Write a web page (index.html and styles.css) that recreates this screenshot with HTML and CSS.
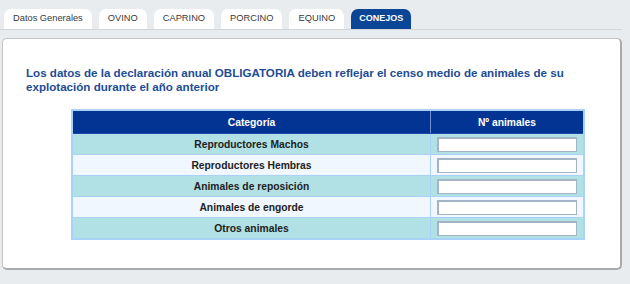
FILE: index.html
```html
<!DOCTYPE html>
<html lang="es">
<head>
  <meta charset="UTF-8" />
  <title>Censo</title>
  <link rel="stylesheet" href="styles.css">
</head>
<body>
  <div class="tabs">
    <div class="tab">Datos Generales</div>
    <div class="tab">OVINO</div>
    <div class="tab">CAPRINO</div>
    <div class="tab">PORCINO</div>
    <div class="tab">EQUINO</div>
    <div class="tab active">CONEJOS</div>
  </div>
  <div class="panel">
    <p class="notice">Los datos de la declaración anual OBLIGATORIA deben reflejar el censo medio de animales de su explotación durante el año anterior</p>
    <table class="censo">
      <tr><th class="cat">Categoría</th><th>Nº animales</th></tr>
      <tr class="odd"><td>Reproductores Machos</td><td><input type="text"></td></tr>
      <tr class="even"><td>Reproductores Hembras</td><td><input type="text"></td></tr>
      <tr class="odd"><td>Animales de reposición</td><td><input type="text"></td></tr>
      <tr class="even"><td>Animales de engorde</td><td><input type="text"></td></tr>
      <tr class="odd"><td>Otros animales</td><td><input type="text"></td></tr>
    </table>
  </div>
</body>
</html>
```

FILE: styles.css
```css
body {
  margin: 0;
  background-color: #e8ecef;
  font-family: 'Liberation Sans', Arial, sans-serif;
  font-size: 11px;
  color: #222;
}
.tabs {
  display: flex;
  gap: 7px;
  padding: 9px 0 0 4px;
  margin-right: 8px;
  border-bottom: 1px solid #d2d6d9;
}
.tab {
  height: 20px;
  padding: 3px 9px 0;
  box-sizing: border-box;
  background-color: #fff;
  color: #3a3a3a;
  font-size: 9.3px;
  border-radius: 7px 7px 0 0;
  line-height: 12px;
}
.tab.active {
  background-color: #0b4696;
  color: #fff;
  font-weight: bold;
  font-size: 9px;
  padding: 3px 8px 0;
}
.panel {
  margin: 8px 8px 0 2px;
  height: 232px;
  box-sizing: border-box;
  background-color: #fff;
  border: 1px solid #c4c4c4;
  border-right: 2px solid #aaa;
  border-bottom: 2px solid #aaa;
  border-radius: 5px;
  padding: 27px 20px 0 23px;
}
.notice {
  margin: 0 0 15px;
  color: #1d4c96;
  font-size: 11.6px;
  font-weight: bold;
  line-height: 14px;
}
.censo {
  margin-left: 45px;
  width: 514px;
  border-collapse: collapse;
  border: 2px solid #a9d2fb;
  font-size: 10.3px;
}
.censo th, .censo td {
  border: 1px solid #a9d2fb;
  text-align: center;
  font-weight: bold;
  padding: 0;
}
.censo th {
  background-color: #033494;
  color: #fff;
  height: 22px;
  border-color: #1b4aa8 #6f8fd0;
}
.censo th.cat {
  width: 357px;
}
.censo td {
  height: 20px;
  color: #222;
}
.odd td {
  background-color: #b1e0e5;
}
.even td {
  background-color: #f0f7fe;
}
.censo input {
  display: block;
  width: 140px;
  height: 15px;
  margin: 0 auto;
  box-sizing: border-box;
  border: 1px solid #a3b4c6;
  border-top-width: 2px;
  border-left-width: 2px;
  background: #fff;
}
```
